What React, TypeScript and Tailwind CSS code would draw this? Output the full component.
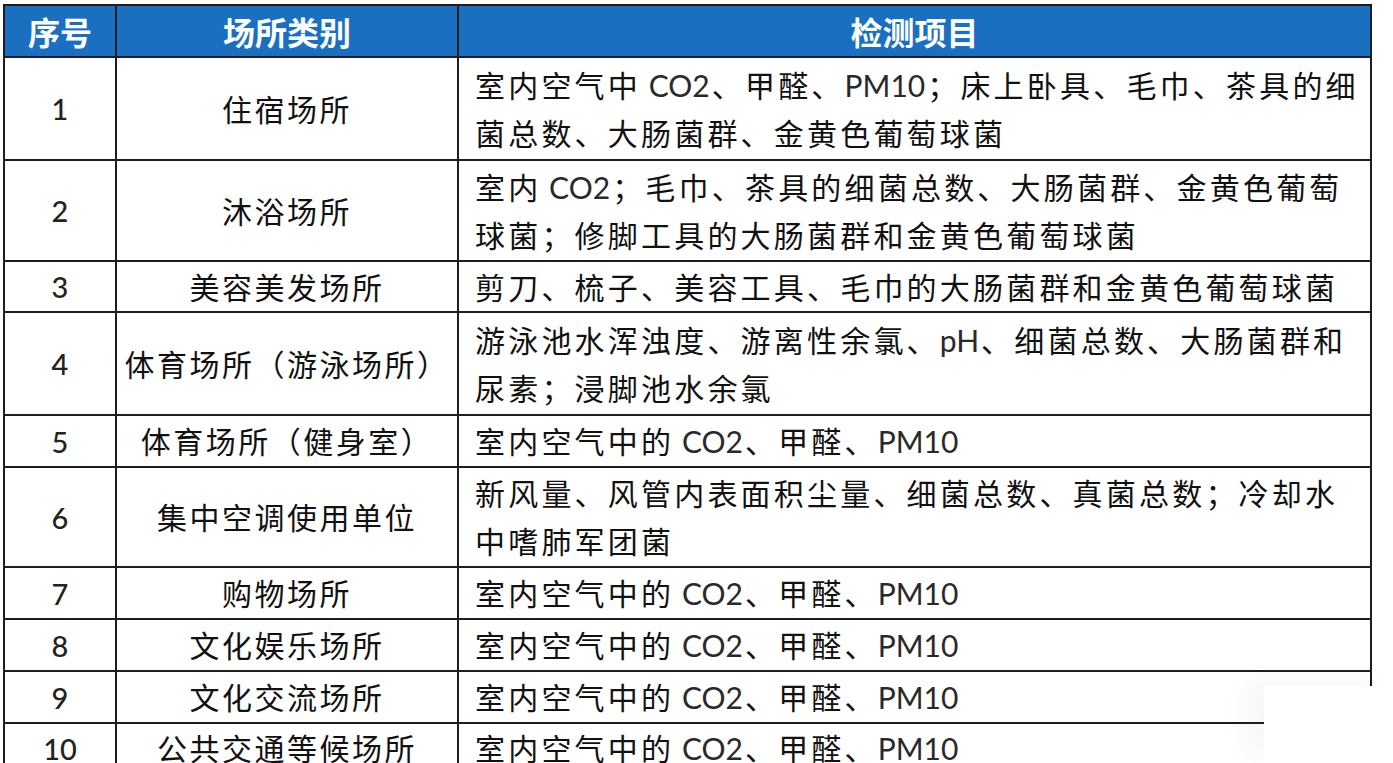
const rows: { no: string; place: string; items: string[]; h: string }[] = [
  {
    no: "1",
    place: "住宿场所",
    items: ["室内空气中 CO2、甲醛、PM10；床上卧具、毛巾、茶具的细", "菌总数、大肠菌群、金黄色葡萄球菌"],
    h: "h-[103px]",
  },
  {
    no: "2",
    place: "沐浴场所",
    items: ["室内 CO2；毛巾、茶具的细菌总数、大肠菌群、金黄色葡萄", "球菌；修脚工具的大肠菌群和金黄色葡萄球菌"],
    h: "h-[101px]",
  },
  {
    no: "3",
    place: "美容美发场所",
    items: ["剪刀、梳子、美容工具、毛巾的大肠菌群和金黄色葡萄球菌"],
    h: "h-[51px]",
  },
  {
    no: "4",
    place: "体育场所（游泳场所）",
    items: ["游泳池水浑浊度、游离性余氯、pH、细菌总数、大肠菌群和", "尿素；浸脚池水余氯"],
    h: "h-[103px]",
  },
  { no: "5", place: "体育场所（健身室）", items: ["室内空气中的 CO2、甲醛、PM10"], h: "h-[52px]" },
  {
    no: "6",
    place: "集中空调使用单位",
    items: ["新风量、风管内表面积尘量、细菌总数、真菌总数；冷却水", "中嗜肺军团菌"],
    h: "h-[100px]",
  },
  { no: "7", place: "购物场所", items: ["室内空气中的 CO2、甲醛、PM10"], h: "h-[52px]" },
  { no: "8", place: "文化娱乐场所", items: ["室内空气中的 CO2、甲醛、PM10"], h: "h-[52px]" },
  { no: "9", place: "文化交流场所", items: ["室内空气中的 CO2、甲醛、PM10"], h: "h-[52px]" },
  { no: "10", place: "公共交通等候场所", items: ["室内空气中的 CO2、甲醛、PM10"], h: "h-[46px]" },
];

// latin runs (CO2, PM10, pH) use no extra tracking, like Calibri in the original
function Mixed({ text }: { text: string }) {
  const parts = text.split(/([A-Za-z0-9]+)/);
  return (
    <>
      {parts.map((p, i) =>
        /^[A-Za-z0-9]+$/.test(p) ? (
          <span key={i} className="tracking-normal text-[#2a2a2a] mr-[2px]">
            {p}
          </span>
        ) : (
          <span key={i}>{p.replace(/ $/, "")}{p.endsWith(" ") ? <span className="tracking-normal"> </span> : null}</span>
        )
      )}
    </>
  );
}

export default function App() {
  return (
    <div className="relative w-[1393px] h-[763px] overflow-hidden bg-white font-['Lato','Noto_Sans_CJK_SC',sans-serif] text-[#111]">
      <div className="pl-[3px] pt-[4px]">
        <table className="table-fixed border-collapse w-[1367px]">
          <colgroup>
            <col className="w-[112px]" />
            <col className="w-[342px]" />
            <col className="w-[913px]" />
          </colgroup>
          <thead>
            <tr className="h-[52px] bg-[#1b6fc0] text-white text-[32px] font-bold">
              <th className="border-2 border-[#1e1e1e] text-center leading-none font-['Noto_Sans_CJK_SC',sans-serif]">序号</th>
              <th className="border-2 border-[#1e1e1e] text-center leading-none font-['Noto_Sans_CJK_SC',sans-serif]">场所类别</th>
              <th className="border-2 border-[#1e1e1e] text-center leading-none font-['Noto_Sans_CJK_SC',sans-serif]">检测项目</th>
            </tr>
          </thead>
          <tbody>
            {rows.map((r) => (
              <tr key={r.no} className={r.h}>
                <td className="border-2 border-[#1e1e1e] text-center text-[29px] font-medium text-[#222] leading-none">{r.no}</td>
                <td className="border-2 border-[#1e1e1e] text-center text-[30px] leading-none whitespace-nowrap tracking-[2.5px]">
                  {r.place}
                </td>
                <td className="border-2 border-[#1e1e1e] pl-[16px] text-[30px] leading-[48px] tracking-[3.2px] whitespace-nowrap align-middle">
                  {r.items.map((line, i) => (
                    <div key={i}>
                      <Mixed text={line} />
                    </div>
                  ))}
                </td>
              </tr>
            ))}
          </tbody>
        </table>
      </div>
      <div className="absolute left-[1264px] top-[686px] right-0 bottom-0 bg-white shadow-[-18px_-6px_28px_rgba(0,0,0,0.035)]" />
    </div>
  );
}
